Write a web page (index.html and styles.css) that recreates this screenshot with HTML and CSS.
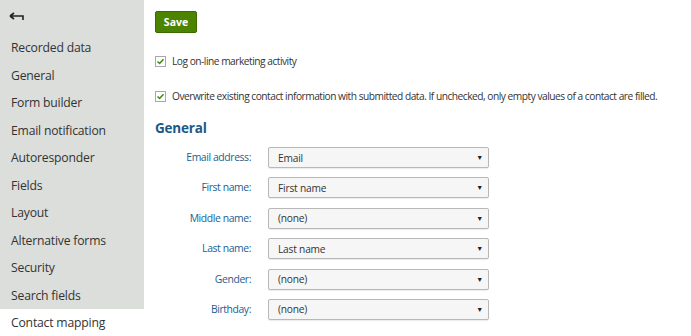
FILE: index.html
```html
<!DOCTYPE html>
<html>
<head>
<meta charset="utf-8">
<link rel="stylesheet" href="styles.css">
</head>
<body>
<div class="page">
  <nav class="sidebar">
    <div class="back">
      <svg width="16" height="10" viewBox="0 0 16 10"><path d="M1 4 L5 1 M1 4 L5 7 M1 4 H14 V8" fill="none" stroke="#222" stroke-width="1.6"/></svg>
    </div>
    <ul class="menu">
      <li class="item">Recorded data</li>
      <li class="item">General</li>
      <li class="item">Form builder</li>
      <li class="item">Email notification</li>
      <li class="item">Autoresponder</li>
      <li class="item">Fields</li>
      <li class="item">Layout</li>
      <li class="item">Alternative forms</li>
      <li class="item">Security</li>
      <li class="item">Search fields</li>
      <li class="item active">Contact mapping</li>
    </ul>
  </nav>
  <main class="content">
    <button class="save">Save</button>
    <label class="check check-first"><span class="box"><svg width="9" height="9" viewBox="0 0 9 9"><path d="M1.5 4.5 L3.6 6.5 L7.5 2.2" fill="none" stroke="#3d8b0a" stroke-width="1.5"/></svg></span>Log on-line marketing activity</label>
    <label class="check"><span class="box"><svg width="9" height="9" viewBox="0 0 9 9"><path d="M1.5 4.5 L3.6 6.5 L7.5 2.2" fill="none" stroke="#3d8b0a" stroke-width="1.5"/></svg></span>Overwrite existing contact information with submitted data. If unchecked, only empty values of a contact are filled.</label>
    <h2 class="heading">General</h2>
    <div class="form">
      <div class="label">Email address:</div><div class="select"><span>Email</span><span class="caret">▼</span></div>
      <div class="label">First name:</div><div class="select"><span>First name</span><span class="caret">▼</span></div>
      <div class="label">Middle name:</div><div class="select"><span>(none)</span><span class="caret">▼</span></div>
      <div class="label">Last name:</div><div class="select"><span>Last name</span><span class="caret">▼</span></div>
      <div class="label">Gender:</div><div class="select"><span>(none)</span><span class="caret">▼</span></div>
      <div class="label">Birthday:</div><div class="select"><span>(none)</span><span class="caret">▼</span></div>
    </div>
  </main>
</div>
</body>
</html>
```
FILE: styles.css
```css
* { box-sizing: border-box; }
html, body { margin: 0; padding: 0; background: #fff; }
body { font-family: "Open Sans", "Noto Sans", sans-serif; color: #333; }
.page { display: flex; align-items: flex-start; height: 336px; overflow: hidden; }
.sidebar { width: 144px; flex: none; }
.back { height: 34px; background: #dcdedb; padding: 12px 0 0 9px; }
.back svg { display: block; }
.menu { list-style: none; margin: 0; padding: 0; }
.item { height: 27.5px; line-height: 27.5px; padding-left: 11px; font-size: 12.2px; letter-spacing: -0.2px; background: #dcdedb; color: #333; white-space: nowrap; }
.item.active { background: #fff; }
.content { padding: 11px 0 0 11px; flex: 1; }
.save { display: block; width: 42px; height: 22px; padding: 0; border: 1px solid #3b6b00; border-radius: 2px; background: #4c8300; color: #fff; font-family: inherit; font-weight: 700; font-size: 10.5px; }
.check { display: flex; align-items: center; font-size: 10.2px; letter-spacing: -0.49px; color: #333; white-space: nowrap; margin-top: 22px; height: 12px; }
.check + .check { margin-top: 23px; }
.check-first { margin-top: 22px; }
.box { width: 11px; height: 11px; border: 1px solid #a8a8a8; background: #fff; margin-right: 6px; display: flex; align-items: center; justify-content: center; flex: none; }
.box svg { display: block; }
.heading { margin: 18px 0 0 0; font-size: 13.5px; font-weight: 700; color: #1b5a87; line-height: 16px; letter-spacing: -0.2px; }
.form { display: grid; grid-template-columns: 96px 221px; column-gap: 17px; row-gap: 9.4px; margin-top: 11px; }
.label { font-size: 10.4px; color: #1b5e90; text-align: right; line-height: 21px; font-weight: 500; letter-spacing: -0.4px; }
.select { height: 21px; border: 1px solid #b8b8b8; border-radius: 2px; background: #f6f6f6; display: flex; align-items: center; justify-content: space-between; padding: 0 5px 0 9px; font-size: 10.2px; letter-spacing: -0.2px; color: #333; box-shadow: 0 1px 1px rgba(0,0,0,0.08); }
.caret { font-size: 7px; color: #222; }
```
